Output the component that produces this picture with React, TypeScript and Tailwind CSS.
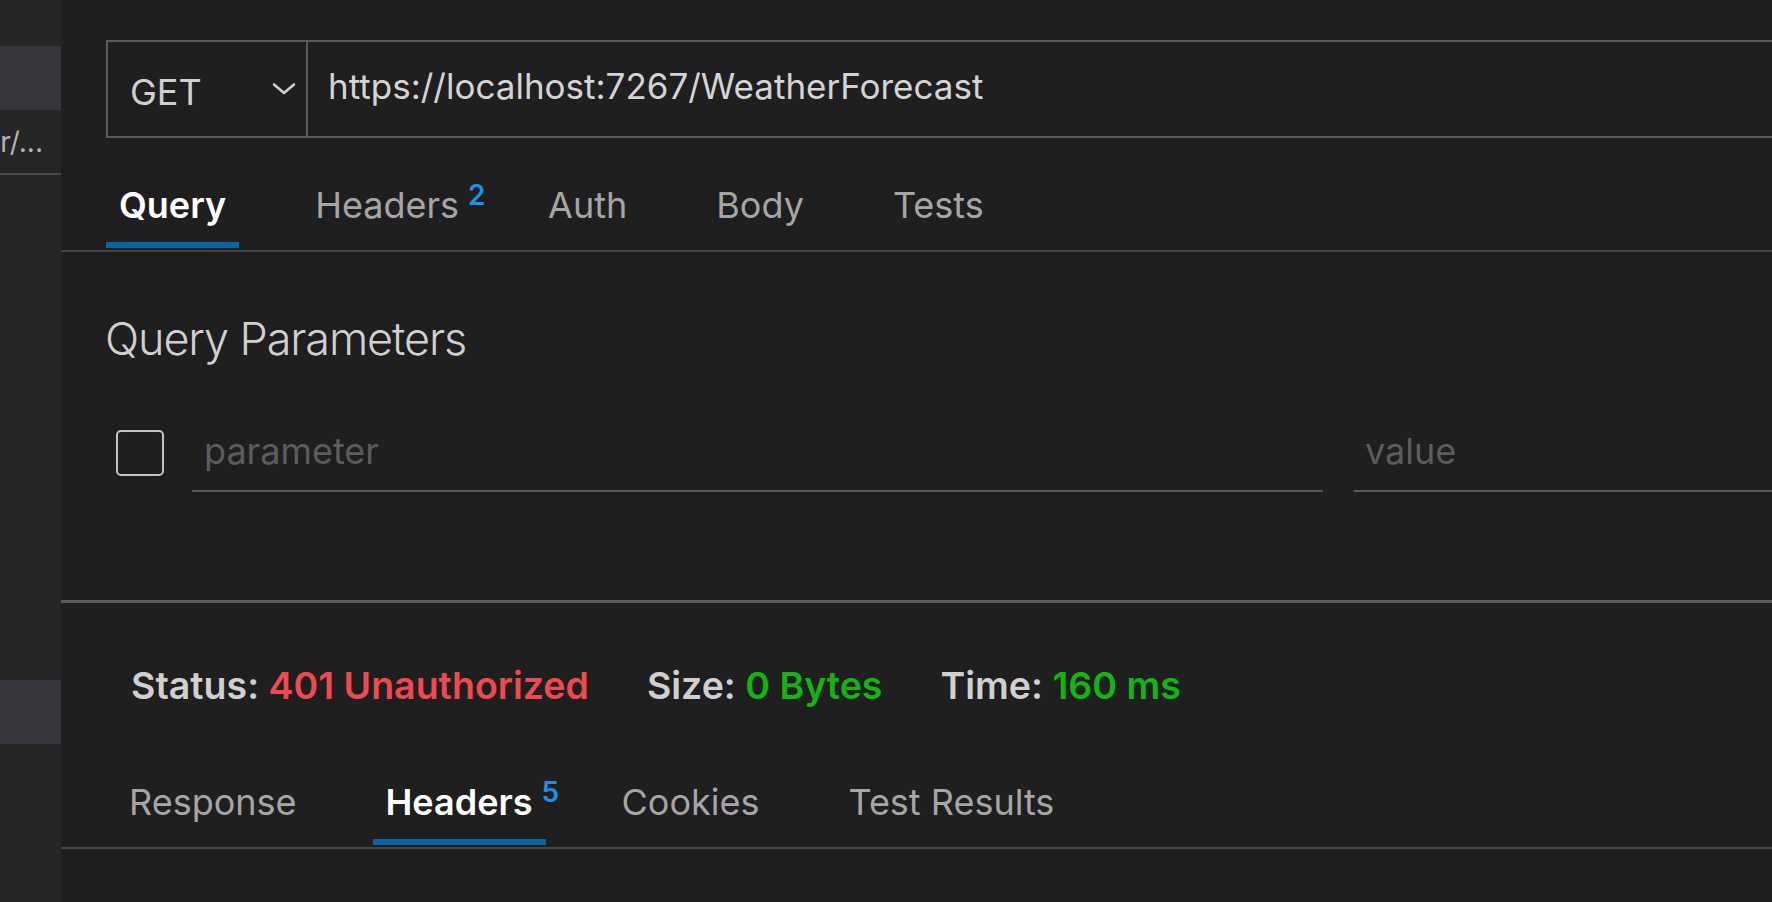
import React from "react";

const requestTabs = [
  { label: "Query", active: true },
  { label: "Headers", badge: "2" },
  { label: "Auth" },
  { label: "Body" },
  { label: "Tests" },
];

const responseTabs = [
  { label: "Response" },
  { label: "Headers", badge: "5", active: true },
  { label: "Cookies" },
  { label: "Test Results" },
];

function Tabs({ tabs, className }: { tabs: any[]; className: string }) {
  return (
    <div className={"flex gap-[63px] border-b-2 border-[#474747] " + className}>
      {tabs.map((t) => (
        <div key={t.label} className="flex flex-col">
          <div
            className={
              "px-[13px] text-[36px] leading-[44px] " +
              (t.active ? "font-semibold text-white" : "text-[#a6a6a6]")
            }
          >
            <span className="relative">
              {t.label}
              {t.badge && (
                <span className="absolute left-full top-[-10px] ml-[9px] text-[28px] font-semibold text-[#1c93e8]">
                  {t.badge}
                </span>
              )}
            </span>
          </div>
          <div
            className={
              "mt-[15px] mb-[2px] h-[6px] " +
              (t.active ? "bg-[#0a64a4]" : "bg-transparent")
            }
          />
        </div>
      ))}
    </div>
  );
}

export default function App() {
  return (
    <div
      className="flex h-[902px] w-full overflow-hidden bg-[#1f1f1f]"
      style={{ fontFamily: "Inter, 'Noto Sans', sans-serif" }}
    >
      {/* sidebar */}
      <div className="flex w-[61px] shrink-0 flex-col bg-[#262626]">
        <div className="h-[46px]" />
        <div className="h-[64px] bg-[#36373c]" />
        <div className="flex h-[65px] items-center justify-end overflow-hidden border-b-2 border-[#4a4a4a] pr-[18px] text-[28px] whitespace-nowrap text-[#b4b4b4]">
          weather/...
        </div>
        <div className="h-[505px]" />
        <div className="h-[64px] bg-[#36373c]" />
      </div>

      {/* main */}
      <div className="flex min-w-0 flex-1 flex-col">
        {/* url bar */}
        <div className="pt-[40px] pl-[45px]">
          <div className="flex h-[98px] border-y-2 border-l-2 border-[#5a5a5a]">
            <div className="flex w-[200px] shrink-0 items-center justify-between border-r-2 border-[#5a5a5a] pl-[22px] pr-[10px]">
              <span className="pt-[6px] text-[36px] text-[#d0d0d0]">GET</span>
              <svg width="24" height="14" viewBox="0 0 24 14" fill="none">
                <path
                  d="M2 2.5 L12 11 L22 2.5"
                  stroke="#d0d0d0"
                  strokeWidth="2.6"
                  strokeLinecap="round"
                  strokeLinejoin="round"
                />
              </svg>
            </div>
            <div className="flex items-center pb-[6px] pl-[20px] text-[35px] whitespace-nowrap text-[#d4d4d4]">
              https://localhost:7267/WeatherForecast
            </div>
          </div>
        </div>

        <Tabs tabs={requestTabs} className="mt-[45px] pl-[45px]" />

        {/* query parameters */}
        <div className="mt-[58px] pl-[44px] text-[45px] leading-[58px] font-light tracking-tight text-[#d0d0d0]">
          Query Parameters
        </div>
        <div className="mt-[60px] flex items-start pl-[55px]">
          <div className="mt-[2px] h-[46px] w-[48px] shrink-0 rounded-[5px] border-2 border-[#c4c4c4]" />
          <div className="ml-[28px] w-[1131px] shrink-0 border-b-2 border-[#575757] pt-[1px] pb-[17px] pl-[12px] text-[36px] leading-[44px] text-[#5c5c5c]">
            parameter
          </div>
          <div className="ml-[31px] flex-1 border-b-2 border-[#575757] pt-[1px] pb-[17px] pl-[11px] text-[36px] leading-[44px] text-[#5c5c5c]">
            value
          </div>
        </div>

        {/* response */}
        <div className="mt-[108px] border-t-[3px] border-[#5a5a5a]">
          <div className="flex items-center gap-[58px] pt-[61px] pl-[70px] text-[37.5px] leading-[44px] font-semibold whitespace-nowrap">
            <div>
              <span className="text-[#d0d0d0]">Status: </span>
              <span className="text-[#f04a50]">401 Unauthorized</span>
            </div>
            <div>
              <span className="text-[#d0d0d0]">Size: </span>
              <span className="text-[#12b512]">0 Bytes</span>
            </div>
            <div>
              <span className="text-[#d0d0d0]">Time: </span>
              <span className="text-[#12b512]">160 ms</span>
            </div>
          </div>
          <Tabs tabs={responseTabs} className="mt-[72px] pl-[55px]" />
        </div>
      </div>
    </div>
  );
}
